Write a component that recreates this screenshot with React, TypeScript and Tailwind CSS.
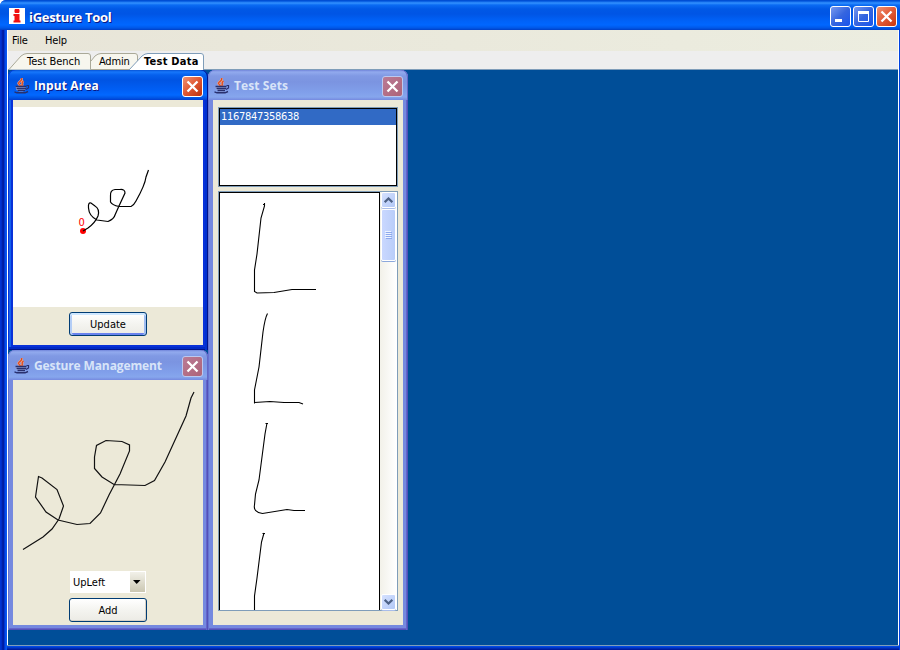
import React from 'react';

const ui = "font-['DejaVu_Sans_Condensed','DejaVu_Sans',sans-serif] text-[11px] leading-[14px] whitespace-nowrap";
const caption = "font-['Open_Sans','Noto_Sans',sans-serif] font-bold whitespace-nowrap";

function JavaCup() {
  return (
    <svg className="shrink-0" width="16" height="16" viewBox="0 0 16 16" fill="none">
      <path d="M7.5 0C9 3 4 3.5 4.5 5.500L6.500 8M9.5 3C6.5 5 9.5 5.500 7.8 8" stroke="#f0a080" strokeWidth="2.4" />
      <path d="M7.5 0C9 3 4 3.5 4.5 5.500L6.500 8M9.5 3C6.5 5 9.5 5.500 7.8 8" stroke="#d8481f" strokeWidth="1.2" />
      <path d="M1.500 8.500H12L11 12L9 13.500H5L2.500 12Z" fill="#a9b4e4" />
      <path d="M1.500 8.5H12.500M2.500 10.5H12M3.500 12.5H11" stroke="#28306e" strokeWidth="1.3" />
      <path d="M12.500 7.500H14.500V10L12 11.500" stroke="#28306e" strokeWidth="1.2" />
      <path d="M0.500 13.800L3 14.800H11L14 13.500" stroke="#28306e" strokeWidth="1.4" />
    </svg>
  );
}

function CloseButton({ active }: { active: boolean }) {
  return (
    <div className={`flex h-[21px] w-[21px] shrink-0 items-center justify-center rounded-[3px] border ${active ? 'border-white bg-linear-to-br from-[#f09070] via-[#df5631] to-[#bd3008]' : 'border-[#bcc9ef] bg-linear-to-br from-[#ba7b96] to-[#ad6378]'}`}>
      <svg width="13" height="13" viewBox="0 0 13 13"><path d="M1.500 1.500L11.500 11.500M11.500 1.500L1.500 11.500" stroke="white" strokeWidth="2.3" /></svg>
    </div>
  );
}

type FrameProps = { title: string; active?: boolean; place: string; tracking: string; children: React.ReactNode };
function Frame({ title, active = false, place, tracking, children }: FrameProps) {
  const body = active
    ? 'bg-[#0831d9] shadow-[inset_1px_0_#0831d9,inset_-1px_0_#00138c,inset_-3px_0_#0030d0,inset_0_-1px_#00138c,inset_0_-3px_#0029c5,inset_3px_0_#1260ed]'
    : 'bg-[#7589df] shadow-[inset_1px_0_#6673d1,inset_-1px_0_#5251b8,inset_-2px_0_#6464cb,inset_0_-1px_#5251b8,inset_0_-2px_#6464cb]';
  const bar = active
    ? 'bg-[linear-gradient(#0753d5_0px,#1777fb_2px,#0560ed_5px,#0054e3_10px,#005ff5_20px,#0268ff_25px,#0054e3_28px,#003dd0_30px)] text-white [text-shadow:1px_1px_#0a1883] shadow-[inset_1px_0_#003dd7,inset_-1px_0_#00138c]'
    : 'bg-[linear-gradient(#7185da_0px,#92aaee_2px,#8099e4_6px,#7b94e1_12px,#809fea_22px,#86a6ed_27px,#7589df_30px)] text-[#d8e4f8] shadow-[inset_1px_0_#7184dc,inset_-1px_0_#6469c8]';
  return (
    <section className={`absolute flex flex-col rounded-t-[7px] px-[5px] pb-[5px] ${place} ${body}`}>
      <header className={`-mx-[5px] flex h-[30px] shrink-0 items-center rounded-t-[7px] pt-[2px] pr-[5px] pl-[6px] ${bar}`}>
        <JavaCup />
        <span className={`ml-[4px] flex-1 text-[12px] leading-[16px] ${caption} ${tracking}`}>{title}</span>
        <CloseButton active={active} />
      </header>
      <div className="flex min-h-0 flex-1 flex-col bg-[#ece9d8]">{children}</div>
    </section>
  );
}

function XPButton({ text, focus = false }: { text: string; focus?: boolean }) {
  return (
    <button className={`${ui} h-[24px] w-[78px] shrink-0 rounded-[3px] border border-[#003c74] bg-linear-to-b from-white via-[#f4f4f0] to-[#ecebe5] pt-px text-black ${focus ? 'shadow-[inset_0_2px_#cee7ff,inset_2px_0_#b3cdf6,inset_-2px_0_#a0bdf1,inset_0_-2px_#6982ee]' : 'shadow-[inset_-1px_-1px_#d6d0c5]'}`}>{text}</button>
  );
}

function WindowButton({ kind }: { kind: 'min' | 'max' | 'close' }) {
  return (
    <div className={`flex h-[21px] w-[21px] items-center justify-center rounded-[3px] border border-white ${kind === 'close' ? 'bg-linear-to-br from-[#ef9070] via-[#e15a36] to-[#c93505]' : 'bg-linear-to-br from-[#7898ee] via-[#3565df] to-[#1653ed]'}`}>
      <svg width="19" height="19" viewBox="0 0 19 19" fill="none" stroke="white">
        {kind === 'min' && <path d="M4 13.5H11" strokeWidth="3" />}
        {kind === 'max' && <><path d="M4.5 4V14.5H14.5V4" /><path d="M4 5.5H15" strokeWidth="3" /></>}
        {kind === 'close' && <path d="M4.500 4.500L14.500 14.500M14.500 4.500L4.500 14.500" strokeWidth="2.3" />}
      </svg>
    </div>
  );
}

function ScrollButton({ down = false }: { down?: boolean }) {
  return (
    <div className="flex h-[16px] w-[15px] shrink-0 items-center justify-center rounded-[2px] border border-white bg-linear-to-br from-[#d5e1ff] to-[#b2c8f6] shadow-[0_1px_#a9bdea]">
      <svg width="9" height="6" viewBox="0 0 9 6" fill="none"><path d={down ? 'M0.7 0.8L4.5 4.5L8.3 0.8' : 'M0.7 5.2L4.5 1.5L8.3 5.2'} stroke="#4d6185" strokeWidth="2.2" /></svg>
    </div>
  );
}

export default function App() {
  return (
    <div className="h-[650px] w-[900px] overflow-hidden bg-white">
      <div className="flex h-[650px] w-[900px] flex-col rounded-tl-[6px] bg-[#0042e0] text-black">
        <header className="flex h-[30px] shrink-0 items-center rounded-tl-[6px] bg-[linear-gradient(#0048cc_0px,#0054dc_1px,#3392ff_3px,#0a6bf3_5px,#0058e6_9px,#0055e5_14px,#0062f8_21px,#0067ff_25px,#0057e7_28px,#003fc5_30px)] pt-[2px] pr-[3px] pl-[9px]">
          <svg width="16" height="16" viewBox="0 0 16 16"><path fill="white" d="M0 0H16V16H0Z" /><path fill="#f01010" d="M6 1H10L10.500 2V4L10 5H6L5.500 4V2ZM4.500 6H10.500V12.500H11.500V14.500H4.500V12.500H5.500V8H4.500Z" /></svg>
          <span className={`${caption} ml-[4px] flex-1 pt-[2px] text-[13px] leading-[18px] tracking-[-0.3px] text-white [text-shadow:1px_1px_#0a1883]`}>iGesture Tool</span>
          <div className="flex gap-[2px]"><WindowButton kind="min" /><WindowButton kind="max" /><WindowButton kind="close" /></div>
        </header>
        <div className="flex min-h-0 flex-1 bg-[linear-gradient(90deg,#0038d8_0px,#0029c0_2px,#001590_3px,#0024b8_4px,#0048e8_5px,#0b5bf3_7px,#0042e0_8px)] pr-px pl-[7px]">
          <div className="flex flex-1 flex-col">
            <main className="flex h-[615px] flex-col border-x border-white">
              <nav className={`${ui} flex h-[21px] shrink-0 items-center bg-linear-to-r from-[#e8e5d8] to-[#ecede0] pl-[4px]`}>
                <span className="w-[33px] tracking-[-0.2px]">File</span><span className="tracking-[-0.2px]">Help</span>
              </nav>
              <div className={`${ui} flex h-[19px] shrink-0 border-b border-[#7f9db9] bg-[#eeeeee]`}>
                <div className="relative h-[18px] w-[197px]">
                  <svg className="absolute top-0 left-0" width="198" height="19" viewBox="0 0 198 19" fill="#f7f6ee">
                    <path d="M1 18.5L13 5Q16 2.5 19 2.5H80Q82.5 2.5 82.5 5V18.5" stroke="#aaa998" />
                    <path d="M83 10L87 5Q90 2.5 93 2.5H127Q129.500 2.5 129.500 5V18.5H83" stroke="#aaa998" />
                    <path d="M121 19L134 5Q137 2.500 140 2.500H193Q195.500 2.500 195.500 5V19" fill="white" stroke="#7f9db9" />
                  </svg>
                  <div className="relative flex h-full items-center pt-[3px] pl-[19px]">
                    <span className="w-[72px]">Test Bench</span>
                    <span className="w-[45px] tracking-[-0.2px]">Admin</span>
                    <span className="font-bold tracking-[0.26px]">Test Data</span>
                  </div>
                </div>
              </div>
              <div className="relative flex-1 bg-[#004e98]">
                <Frame title="Input Area" active place="left-0 top-0 h-[280px] w-[200px]" tracking="tracking-[0.1px]">
                  <svg className="mt-[7px] shrink-0 bg-white" width="190" height="200" viewBox="13 107 190 200" fill="none">
                    <text x="78.5" y="226" fill="red" className="font-['DejaVu_Sans_Condensed'] text-[11px]">0</text>
                    <circle cx="83" cy="231" r="3" fill="red" />
                    <path d="M83 231L88 228Q95 223 98 216Q100 209 95 206L91 203Q88 202 88.500 208Q89 216 97 220L108 221.500Q114 219 115 215L119 206L125 193Q125 189 120 189.500H115Q110 190 110.500 196V202Q112 205 119 206.500H131Q134 205 136 201Q145 185 146 177L148.500 170" stroke="black" strokeWidth="1.2" />
                  </svg>
                  <div className="flex justify-center pt-[5px]"><XPButton text="Update" focus /></div>
                </Frame>

                <Frame title="Gesture Management" place="left-0 top-[280px] h-[280px] w-[200px]" tracking="tracking-[-0.12px]">
                  <svg className="shrink-0" width="190" height="191" viewBox="13 380 190 191" fill="none">
                    <path d="M23 549.500L43 537L52 529L59 519L63.500 506L57 489.500L42 478L38.500 476.500L35.500 497L46 512L58 520L77 524.500L90 523.500L100.500 513L109 495L120 474L129.500 451V445L122 441.500L106 440.500L96.500 445.500L94.500 457V468.500L102 477L114 484.500L145 485.500L154.500 480.500L165 462L186 416L191 398L194 392" stroke="#111" strokeWidth="1.2" />
                  </svg>
                  <div className="flex flex-col items-center gap-[5px]">
                    <div className={`${ui} flex h-[22px] w-[76px] items-center border border-white bg-white`}>
                      <span className="flex-1 pt-px pl-[2px]">UpLeft</span>
                      <div className="flex h-[20px] w-[15px] items-center justify-center bg-linear-to-b from-[#f2f1e9] to-[#cbc7b2] pr-px"><svg width="8" height="4"><path d="M0 0H7.500L3.700 4Z" /></svg></div>
                    </div>
                    <XPButton text="Add" />
                  </div>
                </Frame>

                <Frame title="Test Sets" place="left-[200px] top-0 h-[560px] w-[200px]" tracking="tracking-[0.1px]">
                  <div className="flex flex-1 flex-col gap-[4px] px-[5px] pt-[7px] pb-[14px]">
                    <div className="h-[80px] border border-[#7f9db9]">
                      <div className="h-full border border-black bg-white"><div className={`${ui} h-[16px] bg-[#316ac5] pt-px pl-px text-white tracking-[-0.3px]`}>1167847358638</div></div>
                    </div>
                    <div className="flex flex-1 border border-[#7f9db9] bg-white">
                      <svg className="box-border border-x border-t border-black" width="161" height="418" viewBox="220 193 159 417" fill="none" stroke="black" strokeWidth="1.1">
                        <path d="M264.500 203V206L261 218L257 254L254.500 270V291.500L257 293L274 292.500L292 289.500H316M263 204.500H265" />
                        <path d="M267.500 313.500Q265 318 263 332L259 367L254.500 390V403.500M254.500 402.500L270 401.500L284 402.500H299L303 404" />
                        <path d="M265.500 423.500H268M267 423L265 434L259 480L255.500 494L254.500 505Q253 512 262.500 513.500L287 509.500L294 510.500H305" />
                        <path d="M262.500 533.500H265M264 533L261.500 542L257 578L254.500 596V610" />
                      </svg>
                      <div className="flex w-[16px] flex-col items-center bg-linear-to-r from-[#f2f1e9] to-white">
                        <ScrollButton />
                        <div className="mt-px flex h-[52px] w-[15px] items-center justify-center rounded-[2px] border border-white bg-linear-to-r from-[#cad8ff] to-[#b9cdf9] shadow-[0_1px_#8ca8dc]">
                          <svg width="7" height="8" stroke="#8da9ed"><path d="M0 .5H6M0 2.5H6M0 4.500H6M0 6.500H6" stroke="#eef4ff" /><path d="M1 1.500H7M1 3.500H7M1 5.500H7M1 7.500H7" /></svg>
                        </div>
                        <div className="flex-1" /><ScrollButton down />
                      </div>
                    </div>
                  </div>
                </Frame>
              </div>
            </main>
            <footer className="h-[5px] border-t border-[#7f9db9] bg-linear-to-b from-[#0050f0] to-[#001590]" />
          </div>
        </div>
      </div>
    </div>
  );
}
